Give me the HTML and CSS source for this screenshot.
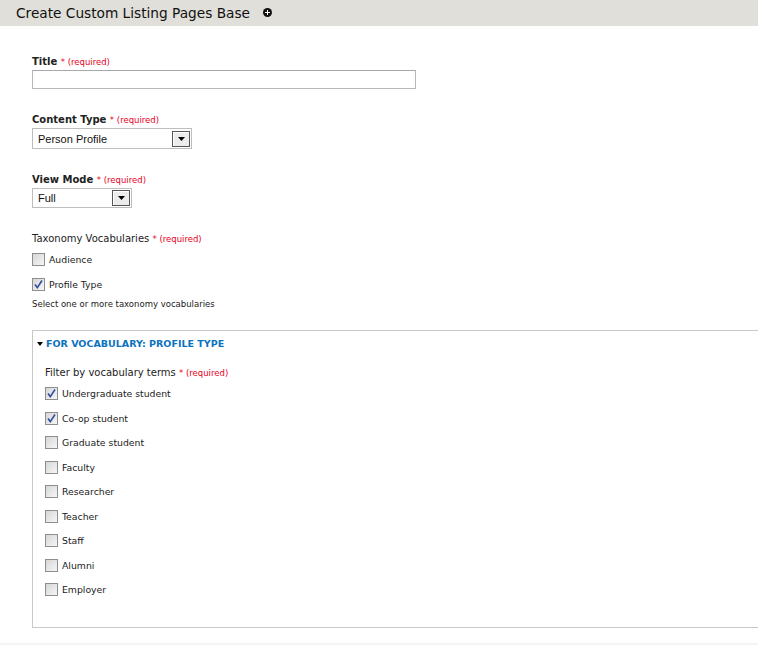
FILE: index.html
```html
<!DOCTYPE html>
<html>
<head>
<meta charset="utf-8">
<link rel="stylesheet" href="styles.css">
</head>
<body>
<div class="page">
  <div class="header">
    <h1 class="page-title">Create Custom Listing Pages Base</h1>
    <span class="add-icon"></span>
  </div>
  <form class="form">
    <div class="field field-title">
      <label class="label">Title <span class="req">* (required)</span></label>
      <div class="text-input"></div>
    </div>
    <div class="field field-select">
      <label class="label">Content Type <span class="req">* (required)</span></label>
      <div class="select select-wide"><span class="select-text">Person Profile</span><span class="select-btn"><svg width="7" height="4" viewBox="0 0 7 4"><path d="M0 0H7L3.5 4Z" fill="#000"/></svg></span></div>
    </div>
    <div class="field field-select">
      <label class="label">View Mode <span class="req">* (required)</span></label>
      <div class="select select-narrow"><span class="select-text">Full</span><span class="select-btn"><svg width="7" height="4" viewBox="0 0 7 4"><path d="M0 0H7L3.5 4Z" fill="#000"/></svg></span></div>
    </div>
    <div class="field field-checks">
      <div class="plain-label">Taxonomy Vocabularies <span class="req">* (required)</span></div>
      <div class="check-row"><span class="box"></span><span class="check-text">Audience</span></div>
      <div class="check-row"><span class="box checked"><svg width="11" height="11" viewBox="0 0 11 11"><path d="M2 5.5L4.3 8.6L9 1.5" fill="none" stroke="#2f4f9e" stroke-width="1.6"/></svg></span><span class="check-text">Profile Type</span></div>
      <div class="desc">Select one or more taxonomy vocabularies</div>
    </div>
    <fieldset class="vocab">
      <div class="legend"><svg class="tri" width="6" height="4" viewBox="0 0 6 4"><path d="M0 0H6L3 4Z" fill="#000"/></svg>FOR VOCABULARY: PROFILE TYPE</div>
      <div class="plain-label filter-label">Filter by vocabulary terms <span class="req">* (required)</span></div>
      <div class="term-list">
        <div class="check-row"><span class="box checked"><svg width="11" height="11" viewBox="0 0 11 11"><path d="M2 5.5L4.3 8.6L9 1.5" fill="none" stroke="#2f4f9e" stroke-width="1.6"/></svg></span><span class="check-text">Undergraduate student</span></div>
        <div class="check-row"><span class="box checked"><svg width="11" height="11" viewBox="0 0 11 11"><path d="M2 5.5L4.3 8.6L9 1.5" fill="none" stroke="#2f4f9e" stroke-width="1.6"/></svg></span><span class="check-text">Co-op student</span></div>
        <div class="check-row"><span class="box"></span><span class="check-text">Graduate student</span></div>
        <div class="check-row"><span class="box"></span><span class="check-text">Faculty</span></div>
        <div class="check-row"><span class="box"></span><span class="check-text">Researcher</span></div>
        <div class="check-row"><span class="box"></span><span class="check-text">Teacher</span></div>
        <div class="check-row"><span class="box"></span><span class="check-text">Staff</span></div>
        <div class="check-row"><span class="box"></span><span class="check-text">Alumni</span></div>
        <div class="check-row"><span class="box"></span><span class="check-text">Employer</span></div>
      </div>
    </fieldset>
  </form>
  <div class="footer"></div>
</div>
</body>
</html>
```

FILE: styles.css
```css
html, body {
  margin: 0;
  padding: 0;
  background: #fff;
  overflow: hidden;
}
body {
  font-family: "DejaVu Sans", Verdana, sans-serif;
  color: #222;
}
.page {
  width: 758px;
  min-height: 645px;
}
.header {
  height: 26px;
  background: #e0dfd9;
  display: flex;
  align-items: center;
  padding-left: 16px;
}
.page-title {
  margin: 0;
  font-size: 13.7px;
  font-weight: normal;
  color: #111;
  line-height: 26px;
  margin-top: -1px;
}
.add-icon {
  position: relative;
  width: 9px;
  height: 9px;
  border-radius: 50%;
  background: #111;
  margin-left: 13px;
  margin-top: -1px;
}
.add-icon::before, .add-icon::after {
  content: "";
  position: absolute;
  background: #fff;
}
.add-icon::before { left: 2px; top: 4px; width: 5px; height: 1px; }
.add-icon::after { left: 4px; top: 2px; width: 1px; height: 5px; }

.form {
  padding: 29px 0 0 32px;
  margin: 0;
}
.label {
  display: block;
  font-size: 10px;
  font-weight: bold;
  color: #222;
  line-height: 14px;
}
.req {
  color: #e8001c;
  font-weight: normal;
  font-size: 8.5px;
}
.field-title .text-input {
  margin-top: 1px;
  width: 382px;
  height: 17px;
  border: 1px solid #b8b8b8;
  border-top-color: #a8a8a8;
}
.field-select { margin-top: 24px; }
.select {
  margin-top: 1px;
  height: 19px;
  border: 1px solid #bdbdbd;
  display: flex;
  align-items: center;
  justify-content: space-between;
  padding-left: 5px;
  padding-right: 1px;
  box-sizing: border-box;
}
.select-wide { width: 160px; height: 21px; }
.select-narrow { width: 100px; height: 20px; }
.select-text {
  font-family: "Liberation Sans", Arial, sans-serif;
  font-size: 11px;
  color: #111;
}
.select-btn {
  width: 16px;
  height: 14px;
  border: 1px solid #555;
  background: #ececec;
  display: flex;
  align-items: center;
  justify-content: center;
  box-shadow: inset 1px 1px 0 #fff;
}
.field-checks { margin-top: 24px; }
.plain-label {
  font-size: 10px;
  line-height: 14px;
  color: #222;
}
.check-row {
  display: flex;
  align-items: center;
  height: 13px;
  margin-top: 7px;
}
.field-checks .check-row + .check-row { margin-top: 12px; }
.box {
  width: 11px;
  height: 11px;
  border: 1px solid #8e8e8e;
  background: linear-gradient(135deg, #d6d6d6, #f6f6f6);
  display: inline-flex;
  align-items: center;
  justify-content: center;
  flex: none;
}
.check-text {
  margin-left: 4px;
  font-size: 9.3px;
  color: #222;
}
.desc {
  margin-top: 7px;
  font-size: 8.5px;
  color: #222;
  line-height: 12px;
}
.vocab {
  margin: 20px -30px 0 0;
  padding: 6px 0 0 12px;
  border: 1px solid #c8c8c8;
  height: 298px;
  box-sizing: border-box;
  min-width: 0;
}
.legend {
  margin-left: -8px;
  font-size: 9.5px;
  font-weight: bold;
  color: #0a72c0;
  line-height: 14px;
  display: flex;
  align-items: center;
}
.tri { margin-right: 3px; }
.filter-label { margin-top: 15px; }
.term-list .check-row { margin-top: 11.5px; }
.term-list .check-row:first-child { margin-top: 7px; }
.footer {
  margin-top: 15px;
  height: 10px;
  background: #f4f4f4;
}
```
